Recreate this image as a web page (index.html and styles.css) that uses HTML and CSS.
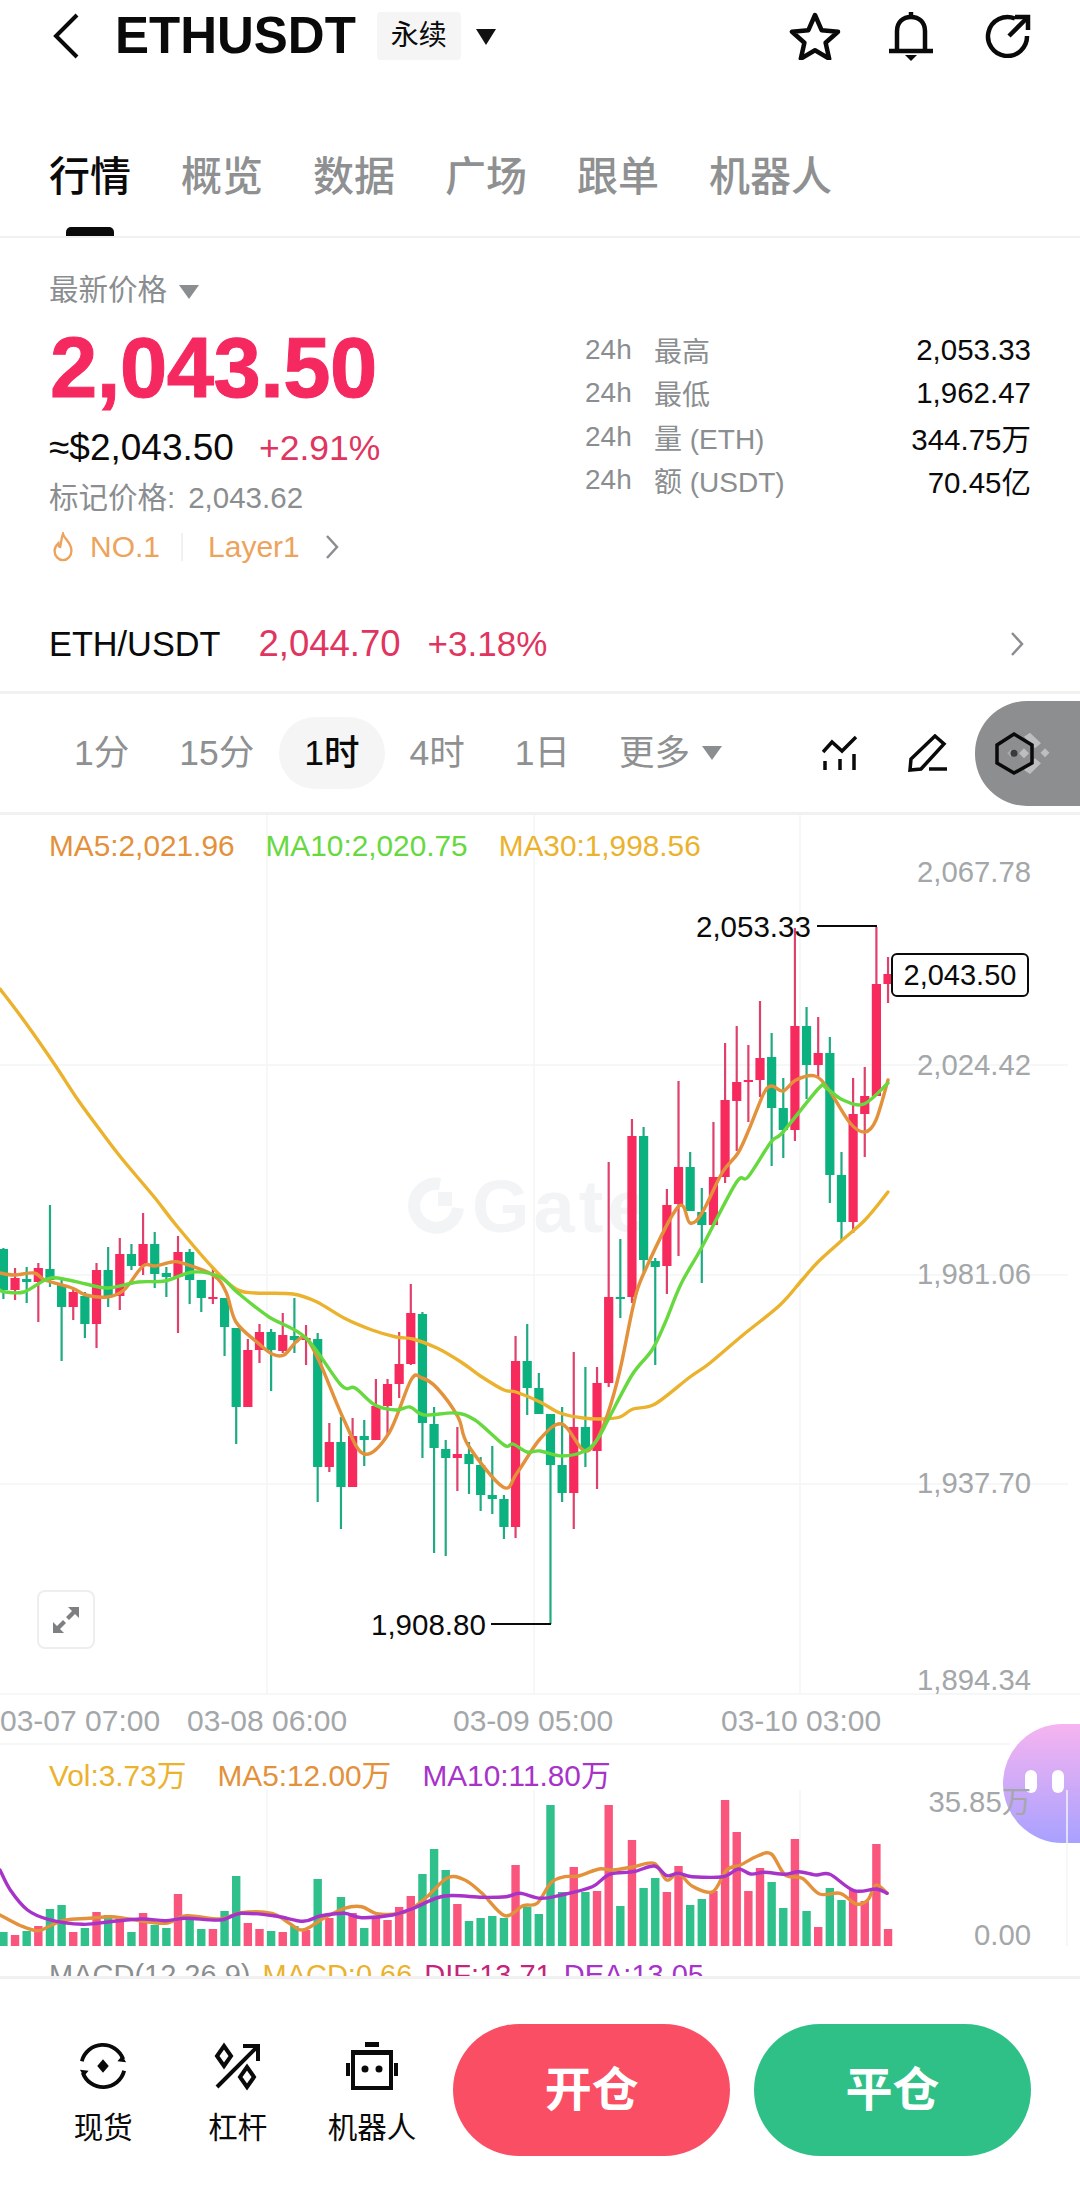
FILE: index.html
```html
<!DOCTYPE html>
<html lang="zh">
<head>
<meta charset="utf-8">
<title>ETHUSDT</title>
<link rel="stylesheet" href="styles.css">
</head>
<body>
<div class="page">
  <header class="topbar">
    <svg class="ic-back" viewBox="0 0 26 46"><path d="M24 2 3 23l21 21"/></svg>
    <span class="symbol">ETHUSDT</span>
    <span class="tag">永续</span>
    <span class="tri tri-dark"></span>
    <div class="top-actions">
      <svg class="ic-star" viewBox="0 0 52 48"><path d="M26 3l6.6 15.2 16.400 1.600-12.400 10.900 3.600 16-14.200-8.400-14.200 8.400 3.600-16L3 19.800l16.400-1.600z"/></svg>
      <svg class="ic-bell" viewBox="0 0 46 50"><path d="M9 40V20C9 11 15 6 23 6s14 5 14 14v20"/><path d="M1 40h44"/><path d="M23 1v5"/><path class="fill" d="M17 44h12l-6 6z"/></svg>
      <svg class="ic-share" viewBox="0 0 46 44"><path d="M30 4.500A19.500 19.500 0 1 0 42 22"/><path d="M24 22 42 4"/><path d="M30 3h13v13"/></svg>
    </div>
  </header>

  <nav class="tabs">
    <span class="tab tab-on">行情</span>
    <span class="tab">概览</span>
    <span class="tab">数据</span>
    <span class="tab">广场</span>
    <span class="tab">跟单</span>
    <span class="tab">机器人</span>
  </nav>

  <section class="summary">
    <div class="quote">
      <div class="left">
        <div class="latest">最新价格<span class="tri tri-gray"></span></div>
        <div class="price">2,043.50</div>
        <div class="usd"><span>≈$2,043.50</span><span class="chg">+2.91%</span></div>
        <div class="mark">标记价格:<span class="mark-v">2,043.62</span></div>
        <div class="rank">
          <svg class="ic-flame" viewBox="0 0 22 32"><path d="M11 2c1 5 9 9 9 18a9 10 0 0 1-18 0c0-4 2-6 4-8 0 3 1 4 2 4 1-4 1-9 3-14z"/></svg>
          <span>NO.1</span><i class="vr"></i><span>Layer1</span>
          <svg class="ic-chev ic-chev-rank" viewBox="0 0 14 26"><path d="M2 2l10 11L2 24"/></svg>
        </div>
      </div>
      <div class="stats">
        <div class="stat"><span class="k">24h</span><span class="n">最高</span><b>2,053.33</b></div>
        <div class="stat"><span class="k">24h</span><span class="n">最低</span><b>1,962.47</b></div>
        <div class="stat"><span class="k">24h</span><span class="n">量 (ETH)</span><b>344.75万</b></div>
        <div class="stat"><span class="k">24h</span><span class="n">额 (USDT)</span><b>70.45亿</b></div>
      </div>
    </div>
    <div class="spot">
      <span class="pair">ETH/USDT</span>
      <span class="spot-price">2,044.70</span>
      <span class="spot-chg">+3.18%</span>
      <svg class="ic-chev ic-chev-spot" viewBox="0 0 14 26"><path d="M2 2l10 11L2 24"/></svg>
    </div>
  </section>

  <section class="frames">
    <span class="fr">1分</span>
    <span class="fr">15分</span>
    <span class="fr fr-on">1时</span>
    <span class="fr">4时</span>
    <span class="fr">1日</span>
    <span class="fr fr-more">更多<span class="tri tri-gray"></span></span>
    <div class="tools">
      <svg class="ic-tool-a" viewBox="0 0 36 36"><path d="M1 17 10 7l10 9L34 2"/><path d="M3 26v9M18 24v11M32 19v16"/></svg>
      <svg class="ic-tool-b" viewBox="0 0 40 38"><path d="M27 2l9 8-23 25-11 1 1-11z"/><path d="M21 35h18"/></svg>
      <div class="hexbtn">
        <svg class="ic-hex" viewBox="0 0 56 42">
          <path class="bn" d="M28 4.700 34 .7l11 10.600-6 5zM28 38l6 4 11-10.700-6-5zM49 16.200l4.500 4.500-4.500 4.500-4.500-4.500zM28 16.300l5 5-5 5-5-5z"/>
          <path class="bn-dim" d="M14.700 17.800l3.500 3.500-3.500 3.500-3.500-3.500z"/>
          <path class="hx" d="M18 2 36 13v18L18 41 1 31V13z"/>
          <circle class="hd" cx="18" cy="21.300" r="3.500"/>
        </svg>
      </div>
    </div>
  </section>

  <section class="chart">
    <div class="bubble"><i></i><i></i></div>
    <svg id="plot" class="plot" viewBox="0 815 1080 1161">
      <g class="grid">
        <path d="M0 1065H1068M0 1275H1068M0 1484H1068M0 1694H1080M0 1744H1010"/>
        <path d="M267 815V1694M534 815V1694M800 815V1694M267 1790V1946M534 1790V1946M800 1790V1946M1067 1790V1946"/>
      </g>
      <g class="mark-wm">
        <path class="wm-ring" d="M440 1184A22 22 0 1 0 458 1208"/>
        <rect class="wm-sq" x="438" y="1192" width="14" height="14"/>
        <text class="wm-text" x="472" y="1232">Gate</text>
      </g>
      <g id="series"></g>
      <g class="axis">
        <text x="1031" y="882">2,067.78</text>
        <text x="1031" y="1075">2,024.42</text>
        <text x="1031" y="1284">1,981.06</text>
        <text x="1031" y="1493">1,937.70</text>
        <text x="1031" y="1690">1,894.34</text>
        <text x="1031" y="1812">35.85万</text>
        <text x="1031" y="1945">0.00</text>
      </g>
      <g class="axis axis-time">
        <text x="0" y="1731">03-07 07:00</text>
        <text x="187" y="1731">03-08 06:00</text>
        <text x="453" y="1731">03-09 05:00</text>
        <text x="721" y="1731">03-10 03:00</text>
      </g>
      <g class="peak">
        <text x="696" y="937">2,053.33</text>
        <path d="M817 926H877"/>
        <text x="371" y="1635">1,908.80</text>
        <path d="M491 1624H551"/>
      </g>
    </svg>
    <div class="now">2,043.50</div>
    <div class="expand">
      <svg viewBox="0 0 30 30"><path d="M17 2h11v11l-4-4-6 6-3-3 6-6zM13 28H2V17l4 4 6-6 3 3-6 6z"/></svg>
    </div>
    <div class="pane-main">
      <div class="legend">
        <span class="c-ma5">MA5:2,021.96</span>
        <span class="c-ma10">MA10:2,020.75</span>
        <span class="c-ma30">MA30:1,998.56</span>
      </div>
    </div>
    <div class="pane-time"></div>
    <div class="pane-vol">
      <div class="legend">
        <span class="c-ma30">Vol:3.73万</span>
        <span class="c-ma5">MA5:12.00万</span>
        <span class="c-pur">MA10:11.80万</span>
      </div>
    </div>
    <div class="legend legend-macd">
      <span class="c-gray">MACD(12,26,9)</span>
      <span class="c-ma30">MACD:0.66</span>
      <span class="c-dif">DIF:13.71</span>
      <span class="c-pur">DEA:13.05</span>
    </div>
  </section>

  <footer class="actions">
    <div class="shortcut">
      <svg class="ic-s1" viewBox="0 0 52 52"><path d="M4 21A22.500 22.500 0 0 1 47 19"/><path d="M48 31A22.500 22.500 0 0 1 5 33"/><path class="fill" d="M26 19l6 7-6 7-6-7zM50 22l-9-1 5-6zM2 30l9 1-5 6z"/></svg>
      <span>现货</span>
    </div>
    <div class="shortcut">
      <svg class="ic-s2" viewBox="0 0 47 46"><path d="M3 44 44 3"/><path d="M29 3h15v15"/><path d="M10 3l7 10-7 10-7-10zM33 24l7 10-7 10-7-10z"/></svg>
      <span>杠杆</span>
    </div>
    <div class="shortcut">
      <svg class="ic-s3" viewBox="0 0 52 48"><path class="fill" d="M19 0h14v5H19zM0 21h4v13H0zM48 21h4v13h-4zM6 9h40v4H6z"/><path d="M7 10h38v36H7z"/><circle class="fill" cx="19" cy="27" r="3.500"/><circle class="fill" cx="33" cy="27" r="3.500"/></svg>
      <span>机器人</span>
    </div>
    <div class="btn btn-open">开仓</div>
    <div class="btn btn-close">平仓</div>
  </footer>
</div>
<script src="chart.js"></script>
</body>
</html>
```

FILE: styles.css
```css
* { box-sizing: border-box; }
html, body { margin: 0; padding: 0; background: #fff; }
body { font-family: "Liberation Sans", "Noto Sans CJK SC", sans-serif; color: #0a0a0a; }
.page { width: 1080px; height: 2204px; overflow: hidden; display: flex; flex-direction: column; }
svg { display: block; fill: none; stroke: #0a0a0a; }
svg .fill { fill: #0a0a0a; stroke: none; }

.tri { display: inline-block; width: 0; height: 0; border-left: 10px solid transparent; border-right: 10px solid transparent; }
.tri-dark { border-top: 16px solid #111; margin-left: 15px; margin-top: 2px; }
.tri-gray { border-top: 14px solid #8b8e90; }

.topbar { height: 72px; display: flex; align-items: center; padding: 0 49px 0 53px; }
.ic-back { width: 26px; height: 46px; stroke-width: 4; }
.symbol { font-size: 51px; font-weight: 700; margin-left: 36px; line-height: 72px; }
.tag { margin-left: 21px; width: 84px; height: 48px; background: #f5f5f5; border-radius: 4px; font-size: 28px; line-height: 48px; text-align: center; }
.top-actions { margin-left: auto; display: flex; align-items: center; }
.ic-star { width: 52px; height: 48px; stroke-width: 4.5; stroke-linejoin: round; }
.ic-bell { width: 46px; height: 50px; stroke-width: 4.5; margin-left: 47px; }
.ic-share { width: 46px; height: 44px; stroke-width: 4.5; margin-left: 51px; }

.tabs { height: 166px; display: flex; gap: 50px; padding: 80px 0 0 49px; border-bottom: 2px solid #f1f1f1; }
.tab { position: relative; font-size: 41px; line-height: 50px; height: 50px; color: #8e9091; font-weight: 500; }
.tab-on { color: #0a0a0a; }
.tab-on::after { content: ""; position: absolute; left: 17px; top: 75px; width: 48px; height: 9px; border-radius: 5px 5px 0 0; background: #0a0a0a; }

.summary { height: 456px; padding: 0 49px; border-bottom: 3px solid #f1f1f1; display: flex; flex-direction: column; }
.quote { display: flex; justify-content: space-between; height: 329px; }
.left { padding-top: 33px; }
.latest { font-size: 29.5px; line-height: 38px; color: #8b8e90; display: flex; align-items: center; gap: 12px; }
.latest .tri { margin-top: 4px; }
.price { font-size: 85px; font-weight: 700; line-height: 100px; margin-top: 9px; color: #f5285f; -webkit-text-stroke: 1px #f5285f; letter-spacing: -0.5px; padding-left: 1px; }
.usd { font-size: 37px; line-height: 44px; margin-top: 8px; display: flex; gap: 25px; }
.chg { color: #e0355f; font-size: 35.5px; }
.mark { font-size: 29.5px; line-height: 40px; margin-top: 8px; color: #8b8e90; }
.mark-v { margin-left: 13px; }
.rank { height: 40px; margin-top: 9px; display: flex; align-items: center; font-size: 30px; color: #eda35c; }
.ic-flame { width: 22px; height: 30px; margin: 0 16px 0 3px; stroke: #eda35c; stroke-width: 2.5; }
.vr { width: 2px; height: 28px; background: #f1f1f1; margin: 0 25px 0 21px; }
.ic-chev { stroke: #8b8e90; stroke-width: 2.5; }
.ic-chev-rank { width: 14px; height: 26px; margin-left: 25px; }

.stats { width: 446px; padding-top: 90px; }
.stat { height: 43.5px; display: flex; align-items: center; font-size: 28px; color: #8b8e90; }
.stat .k { width: 69px; }
.stat b { margin-left: auto; font-weight: 400; font-size: 29.5px; color: #0a0a0a; }

.spot { height: 94px; margin-top: 30px; display: flex; align-items: center; font-size: 34.3px; }
.spot-price { margin-left: 38px; color: #e0355f; font-size: 36.5px; }
.spot-chg { margin-left: 27px; color: #e0355f; font-size: 35px; }
.ic-chev-spot { width: 14px; height: 26px; margin-left: auto; margin-right: 7px; }

.frames { height: 121px; display: flex; align-items: center; padding: 0 0 0 49px; border-bottom: 3px solid #f1f1f1; position: relative; }
.fr { font-size: 35.5px; line-height: 72px; height: 72px; padding: 0 25px; color: #8e9091; }
.fr-on { color: #0a0a0a; background: #f5f5f5; border-radius: 36px; font-weight: 500; }
.fr-more { display: flex; align-items: center; gap: 12px; padding-left: 24px; padding-right: 0; }
.tools { margin-left: auto; display: flex; align-items: center; }
.ic-tool-a { width: 36px; height: 36px; stroke-width: 3.5; }
.ic-tool-b { width: 40px; height: 38px; stroke-width: 3.5; margin-left: 50px; }
.hexbtn { width: 105px; height: 105px; margin: 0 0 0 27px; background: #8c8e90; border-radius: 52px 0 0 52px; display: flex; align-items: center; padding-left: 21px; }
.ic-hex { width: 56px; height: 42px; overflow: visible; }
.ic-hex .hx { stroke: #0a0a0a; stroke-width: 3.5; }
.ic-hex .hd { fill: #3a3a3a; stroke: none; }
.ic-hex .bn { fill: #bcbec0; stroke: none; }
.ic-hex .bn-dim { fill: #a9abad; stroke: none; }

.chart { position: relative; height: 1161px; overflow: hidden; }
.plot { position: absolute; inset: 0; width: 1080px; height: 1161px; }
.grid path { stroke: #f4f5f5; stroke-width: 1.5; }
.wm-ring { stroke: #f2f4f5; stroke-width: 12; }
.wm-sq { fill: #f2f4f5; stroke: none; }
.wm-text { fill: #f2f4f5; stroke: none; font-size: 74px; font-weight: 700; letter-spacing: 4px; }
.axis text { fill: #a4a7a9; stroke: none; font-size: 29.3px; text-anchor: end; }
.axis-time text { text-anchor: start; font-size: 30px; }
.peak text { fill: #0a0a0a; stroke: none; font-size: 29.5px; }
.peak path { stroke: #0a0a0a; stroke-width: 2; }
.wick { stroke-width: 2.2; }
.up { fill: #f72a5e; stroke: none; }
.dn { fill: #0bb17e; stroke: none; }
.wick.up { stroke: #e0406c; fill: none; }
.wick.dn { stroke: #1fab82; fill: none; }
.vup { fill: #fa557c; stroke: none; }
.vdn { fill: #2fc08b; stroke: none; }
.ln { stroke-width: 3.4; stroke-linejoin: round; stroke-linecap: round; fill: none; }
.ln-ma5 { stroke: #e3913a; }
.ln-ma10 { stroke: #66d93e; }
.ln-ma30 { stroke: #ebb22e; }
.ln-pur { stroke: #a733c9; }

.now { position: absolute; left: 891px; top: 138px; width: 138px; height: 44px; background: #fff; border: 2px solid #0a0a0a; border-radius: 6px; font-size: 29px; line-height: 40px; text-align: center; }
.expand { position: absolute; left: 37px; top: 775px; width: 58px; height: 59px; border: 2px solid #eee; border-radius: 8px; display: flex; align-items: center; justify-content: center; background: #fff; }
.expand svg { width: 30px; height: 30px; stroke: none; fill: #7d7f81; }
.bubble { position: absolute; left: 1003px; top: 909px; width: 77px; height: 119px; border-radius: 60px 0 0 60px; background: linear-gradient(180deg, #f6b4f0, #a8a1ff); display: flex; gap: 15px; padding: 46px 0 0 22px; }
.bubble i { display: block; width: 12px; height: 23px; border-radius: 6px; background: #fff; }

.pane-main { position: relative; height: 879px; padding: 11px 0 0 49px; }
.pane-time { height: 50px; }
.pane-vol { position: relative; height: 211px; padding: 12px 0 0 49px; }
.legend { display: flex; font-size: 29.8px; line-height: 40px; gap: 31px; }
.legend-macd { position: relative; padding-left: 49px; gap: 12px; height: 40px; font-size: 29px; }
.c-ma5 { color: #e3913a; }
.c-ma10 { color: #66d93e; }
.c-ma30 { color: #ebb22e; }
.c-pur { color: #a733c9; }
.c-gray { color: #8b8e90; }
.c-dif { color: #c4247c; }

.actions { flex: 1; border-top: 3px solid #f1f1f1; display: flex; align-items: flex-start; padding: 45px 49px 0 36px; background: #fff; position: relative; }
.shortcut { width: 134.5px; display: flex; flex-direction: column; align-items: center; font-size: 29.5px; line-height: 40px; padding-top: 17px; height: 136px; }
.shortcut svg { height: 50px; margin-bottom: 17px; stroke-width: 4; }
.ic-s1 { width: 52px; }
.ic-s2 { width: 47px; }
.ic-s3 { width: 52px; }
.btn { width: 277px; height: 132px; border-radius: 66px; color: #fff; font-size: 47px; font-weight: 700; line-height: 132px; text-align: center; }
.btn-open { background: #f94e64; margin-left: 14px; }
.btn-close { background: #2fc088; margin-left: 24px; }
```

FILE: chart.js
```js
// Each candle: colour, wick top, body top, body bottom, wick bottom (page pixels).
const candles = [
  "g 1248 1249 1290 1299","r 1268 1278 1290 1300","g 1267 1279 1282 1303","r 1263 1268 1282 1322",
  "g 1205 1269 1280 1287","g 1280 1285 1307 1361","r 1288 1292 1307 1320","g 1292 1296 1324 1338",
  "r 1263 1270 1324 1348","g 1247 1270 1296 1307","r 1238 1254 1296 1310","g 1244 1254 1266 1270",
  "r 1213 1244 1266 1275","g 1232 1244 1274 1288","g 1267 1273 1277 1297","r 1236 1252 1277 1333",
  "g 1249 1252 1280 1304","g 1280 1280 1298 1312","r 1268 1297 1299 1304","g 1298 1298 1327 1356",
  "g 1328 1328 1407 1444","r 1339 1350 1407 1407","r 1324 1332 1350 1363","g 1329 1332 1350 1391",
  "r 1313 1335 1351 1353","g 1298 1336 1340 1353","r 1325 1338 1339 1365","g 1333 1339 1467 1502",
  "r 1423 1442 1467 1472","g 1417 1442 1487 1529","r 1418 1436 1487 1487","g 1420 1436 1440 1466",
  "r 1379 1406 1440 1440","r 1379 1384 1406 1436","r 1332 1364 1384 1398","r 1284 1313 1364 1365",
  "g 1312 1314 1423 1458","g 1407 1424 1448 1553","g 1440 1449 1458 1556","r 1427 1454 1458 1491",
  "g 1442 1454 1464 1494","g 1457 1465 1495 1511","g 1446 1495 1499 1514","g 1495 1499 1527 1539",
  "r 1336 1361 1527 1538","g 1324 1361 1388 1415","g 1373 1388 1414 1414","g 1414 1414 1465 1624",
  "g 1407 1465 1493 1502","r 1352 1427 1493 1529","g 1367 1427 1450 1467","r 1367 1383 1451 1489",
  "r 1162 1297 1383 1387","g 1239 1297 1299 1318","r 1119 1136 1297 1303","g 1127 1136 1260 1272",
  "g 1258 1261 1267 1365","r 1189 1205 1266 1294","r 1081 1167 1204 1256","g 1152 1167 1211 1211",
  "g 1188 1212 1225 1283","r 1122 1177 1225 1225","r 1043 1100 1177 1183","r 1026 1082 1101 1151",
  "r 1045 1080 1081 1122","r 1001 1058 1080 1097","g 1033 1057 1108 1166","g 1078 1108 1130 1158",
  "r 928 1026 1130 1141","g 1007 1026 1065 1099","r 1017 1053 1065 1077","g 1037 1053 1175 1203",
  "g 1152 1175 1222 1240","r 1078 1114 1222 1233","r 1067 1096 1114 1157","r 927 984 1096 1096",
  "r 957 974 984 1003"
];

const ma30 = [[0,989],[25,1022],[55,1065],[78,1100],[100,1130],[123,1160],[155,1198],[176,1225],[213,1268],[236,1289],[255,1293],[293,1294],[317,1302],[344,1318],[372,1330],[396,1337],[413,1339],[437,1348],[461,1362],[482,1377],[504,1390],[516,1392],[540,1402],[560,1413],[583,1418],[603,1419],[620,1417],[633,1409],[655,1404],[690,1377],[710,1363],[743,1335],[780,1305],[802,1280],[817,1263],[840,1242],[865,1220],[888,1192]];
const ma5 = [[0,1273],[14,1275],[34,1273],[45,1280],[72,1288],[86,1295],[107,1297],[124,1290],[143,1266],[155,1266],[172,1262],[182,1263],[213,1275],[226,1292],[236,1322],[258,1343],[272,1354],[284,1355],[296,1342],[306,1338],[320,1363],[344,1420],[364,1454],[389,1433],[411,1380],[422,1378],[437,1388],[458,1417],[468,1445],[503,1487],[517,1473],[540,1439],[562,1424],[583,1450],[595,1443],[608,1413],[620,1370],[633,1307],[643,1275],[678,1207],[690,1223],[702,1213],[722,1173],[738,1153],[750,1127],[764,1093],[772,1086],[783,1091],[796,1080],[815,1076],[829,1090],[850,1123],[865,1132],[876,1120],[888,1080]];
const ma10 = [[0,1290],[5,1292],[24,1292],[45,1280],[58,1278],[86,1284],[108,1288],[138,1282],[165,1281],[193,1272],[220,1277],[238,1293],[269,1317],[306,1338],[341,1385],[355,1388],[375,1405],[396,1410],[410,1407],[424,1415],[455,1413],[475,1420],[504,1445],[513,1444],[527,1452],[540,1451],[562,1456],[585,1451],[597,1440],[608,1420],[632,1375],[652,1350],[665,1323],[681,1284],[702,1247],[736,1183],[748,1177],[771,1142],[783,1132],[819,1088],[826,1088],[843,1100],[864,1104],[888,1083]];

// Volume bars: colour + top edge in page pixels; all stand on y = 1946.
const volumes = "g1932 r1935 g1931 r1926 g1909 g1905 r1932 g1928 r1912 g1915 r1918 g1932 r1913 g1925 g1928 r1894 g1918 g1929 r1929 g1911 g1876 r1923 r1929 g1931 r1932 g1926 r1930 g1879 r1918 g1897 r1913 g1928 r1917 r1920 r1907 r1896 g1874 g1849 g1870 r1904 g1921 g1918 g1916 g1918 r1865 g1907 g1914 g1805 g1892 r1867 g1892 r1891 r1805 g1906 r1840 g1888 g1878 r1892 r1866 g1905 g1899 r1891 r1800 r1832 r1891 r1868 g1882 g1908 r1839 g1911 r1927 g1888 g1900 r1890 r1901 r1844 r1929".split(" ");

const volMa5 = [[0,465],[30,497],[55,512],[75,495],[95,480],[130,475],[160,470],[190,478],[240,490],[270,467],[320,477],[350,458],[395,460],[420,490],[440,510],[470,475],[500,445],[525,440],[550,462],[590,455],[620,410],[650,353],[675,360],[700,400],[733,467],[760,437],[780,430],[800,368],[820,350],[840,348],[870,327],[890,330],[920,320],[950,310],[968,360],[985,340],[1005,378],[1035,395],[1055,330],[1075,315],[1100,288],[1120,282],[1140,345],[1165,355],[1190,402],[1220,400],[1243,432],[1260,420],[1272,375],[1288,400]];
const volMa10 = [[0,330],[15,390],[40,450],[70,478],[120,493],[160,485],[205,477],[240,482],[270,475],[320,480],[350,460],[400,468],[440,484],[465,468],[500,460],[525,473],[570,465],[600,445],[645,408],[700,412],[735,410],[755,400],[785,415],[815,405],[860,380],[885,343],[920,335],[950,318],[968,347],[985,340],[1005,350],[1050,350],[1072,327],[1090,342],[1110,337],[1140,343],[1160,335],[1185,345],[1205,343],[1240,392],[1272,387],[1288,400]];

const NS = "http://www.w3.org/2000/svg";
const root = document.getElementById("series");
const STEP = 11.64, X0 = 3.4;

function add(tag, attrs) {
  const el = document.createElementNS(NS, tag);
  for (const k in attrs) el.setAttribute(k, attrs[k]);
  root.appendChild(el);
}

// Smooth curve through the points (Catmull-Rom converted to cubic Beziers).
function line(pts, cls) {
  let d = "M" + pts[0].join(" ");
  for (let i = 0; i < pts.length - 1; i++) {
    const p0 = pts[Math.max(i - 1, 0)], p1 = pts[i], p2 = pts[i + 1], p3 = pts[Math.min(i + 2, pts.length - 1)];
    const c1 = [p1[0] + (p2[0] - p0[0]) / 6, p1[1] + (p2[1] - p0[1]) / 6];
    const c2 = [p2[0] - (p3[0] - p1[0]) / 6, p2[1] - (p3[1] - p1[1]) / 6];
    d += "C" + [c1, c2, p2].map(p => p.map(n => n.toFixed(1)).join(" ")).join(" ");
  }
  add("path", { class: "ln " + cls, d });
}
const volPoint = ([x, v]) => [x / 1.452, 1760 + v / 3];

candles.forEach((row, i) => {
  const [c, wt, bt, bb, wb] = row.split(" ");
  const x = X0 + STEP * i;
  const cls = c === "r" ? "up" : "dn";
  add("line", { class: "wick " + cls, x1: x, x2: x, y1: wt, y2: wb });
  add("rect", { class: cls, x: x - 4.6, width: 9.2, y: bt, height: Math.max(bb - bt, 2) });
});
line(ma30, "ln-ma30");
line(ma5, "ln-ma5");
line(ma10, "ln-ma10");

volumes.forEach((v, i) => {
  const top = +v.slice(1);
  add("rect", { class: v[0] === "r" ? "vup" : "vdn", x: X0 + STEP * i - 4.2, width: 8.4, y: top, height: 1946 - top });
});
line(volMa5.map(volPoint), "ln-ma5");
line(volMa10.map(volPoint), "ln-pur");
```
